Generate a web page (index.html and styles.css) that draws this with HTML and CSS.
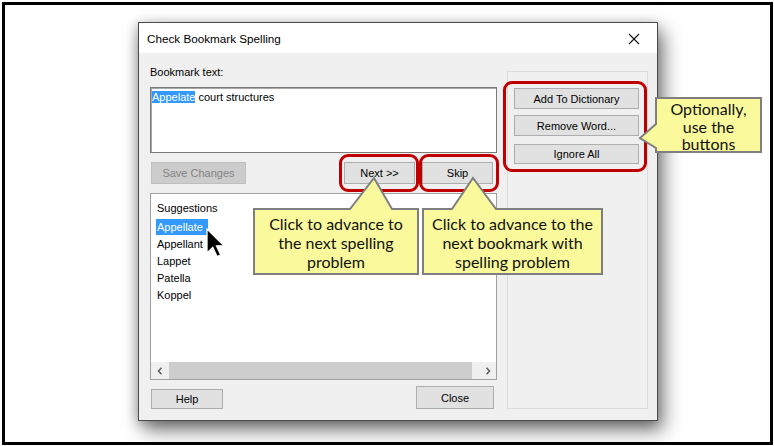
FILE: index.html
```html
<!DOCTYPE html>
<html>
<head>
<meta charset="utf-8">
<link rel="stylesheet" href="styles.css">
</head>
<body>
<div class="stage">
  <div class="frame">
    <div class="dialog">
      <div class="titlebar">
        <span class="title">Check Bookmark Spelling</span>
        <svg class="close" width="12" height="12" viewBox="0 0 12 12"><path d="M1 1 L11 11 M11 1 L1 11" stroke="#111" stroke-width="1.1" fill="none"/></svg>
      </div>
      <div class="body">
        <div class="leftcol">
          <div class="label">Bookmark text:</div>
          <div class="textarea"><span class="sel">Appelate</span> court structures</div>
          <div class="btnrow">
            <div class="btn disabled save">Save Changes</div>
            <div class="spacer"></div>
            <div class="btn next">Next &gt;&gt;</div>
            <div class="btn skip">Skip</div>
          </div>
          <div class="listbox">
            <div class="listcontent">
              <div class="heading">Suggestions</div>
              <div class="item"><span class="sel wide">Appellate</span></div>
              <div class="item"><span>Appellant</span></div>
              <div class="item"><span>Lappet</span></div>
              <div class="item"><span>Patella</span></div>
              <div class="item"><span>Koppel</span></div>
            </div>
            <div class="hscroll">
              <div class="arrow"><svg width="6" height="8" viewBox="0 0 6 8"><path d="M4.5 0.8 L1.5 4 L4.5 7.2" stroke="#606060" stroke-width="1.6" fill="none"/></svg></div>
              <div class="track"><div class="thumb"></div></div>
              <div class="arrow"><svg width="6" height="8" viewBox="0 0 6 8"><path d="M1.5 0.8 L4.5 4 L1.5 7.2" stroke="#606060" stroke-width="1.6" fill="none"/></svg></div>
            </div>
          </div>
          <div class="bottomrow">
            <div class="btn help">Help</div>
            <div class="spacer"></div>
            <div class="btn closebtn">Close</div>
          </div>
        </div>
        <div class="rightpanel">
          <div class="btn side b1">Add To Dictionary</div>
          <div class="btn side b2">Remove Word...</div>
          <div class="btn side b3">Ignore All</div>
        </div>
      </div>
    </div>
  </div>

  <div class="hl hl-next"></div>
  <div class="hl hl-skip"></div>
  <div class="hl hl-side"></div>

  <svg class="cursor" width="19" height="30" viewBox="0 0 19 30">
    <path d="M1 1 L1 25 L6.8 19.3 L11 28.5 L14.7 27 L10.5 17.8 L18 17.8 Z" fill="#000" stroke="#fff" stroke-width="1.3" stroke-linejoin="miter"/>
  </svg>

  <svg class="callouts" width="774" height="446" viewBox="0 0 774 446">
    <path d="M254 209 H350 L374 178 L392 209 H418 V274 H254 Z" fill="#fafa9c" stroke="#7f7f7f" stroke-width="2"/>
    <path d="M423 209 H452 L473 178 L496 209 H602 V274 H423 Z" fill="#fafa9c" stroke="#7f7f7f" stroke-width="2"/>
    <path d="M656 98 H761 V152 H656 V148 L640 138 L656 124 Z" fill="#fafa9c" stroke="#7f7f7f" stroke-width="2"/>
  </svg>
  <div class="ctext c1">Click to advance to<br>the next spelling<br>problem</div>
  <div class="ctext c2">Click to advance to the<br>next bookmark with<br>spelling problem</div>
  <div class="ctext c3">Optionally,<br>use the<br>buttons</div>
</div>
</body>
</html>
```

FILE: styles.css
```css
html, body {
  margin: 0;
  padding: 0;
  background: #fff;
}
.stage {
  position: relative;
  width: 774px;
  height: 446px;
  overflow: hidden;
}
.frame {
  box-sizing: border-box;
  width: 771px;
  height: 443px;
  margin: 2px 1px 1px 2px;
  border: 3px solid #000;
  background: #fff;
  overflow: hidden;
  padding: 17px 0 0 133px;
}
.dialog {
  box-sizing: border-box;
  width: 520px;
  height: 399px;
  border: 1px solid #4a4a4a;
  background: #f0f0f0;
  box-shadow: 5px 9px 18px rgba(0,0,0,0.55), -2px 2px 10px rgba(0,0,0,0.2);
  font-family: "Liberation Sans", Arial, sans-serif;
  font-size: 11px;
  color: #000;
  display: flex;
  flex-direction: column;
}
.titlebar {
  height: 30px;
  background: #fff;
  display: flex;
  align-items: center;
  padding: 0 17px 0 8px;
}
.title {
  font-size: 11.7px;
  flex: 1;
  color: #000;
  margin-top: 1px;
}
.close {
  display: block;
  margin-top: 1px;
}
.body {
  flex: 1;
  display: grid;
  grid-template-columns: 347px 141px;
  column-gap: 10px;
  align-items: start;
  padding: 11px 9px 0 11px;
}
.leftcol {
  display: flex;
  flex-direction: column;
}
.label {
  line-height: 16px;
  height: 16px;
}
.textarea {
  box-sizing: border-box;
  margin-top: 7px;
  height: 66px;
  background: #fff;
  border: 1px solid #7a7a7a;
  box-shadow: inset 1px 1px 0 #a8a8a8;
  padding: 2px 1px;
  line-height: 14px;
}
.sel {
  background: #3399ff;
  color: #fff;
}
.btnrow {
  margin-top: 9px;
  height: 22px;
  display: flex;
}
.spacer {
  flex: 1;
}
.btn {
  box-sizing: border-box;
  background: #e1e1e1;
  border: 1px solid #adadad;
  display: flex;
  align-items: center;
  justify-content: center;
  color: #000;
}
.btn.disabled {
  background: #cccccc;
  border-color: #bfbfbf;
  color: #838383;
}
.save {
  width: 95px;
  margin-left: 1px;
}
.next {
  width: 71px;
}
.skip {
  width: 71px;
  margin-left: 7px;
  margin-right: 4px;
}
.listbox {
  box-sizing: border-box;
  margin-top: 9px;
  height: 187px;
  background: #fff;
  border: 1px solid #a0a0a0;
  display: flex;
  flex-direction: column;
}
.listcontent {
  flex: 1;
  padding: 6px 0 0 6px;
}
.heading {
  line-height: 17px;
  height: 17px;
  margin-bottom: 2px;
}
.item {
  line-height: 17px;
  height: 17px;
}
.item span {
  display: inline-block;
  line-height: 16px;
  padding: 0 1px;
  margin-left: -1px;
}
.item span.wide {
  padding-right: 5px;
}
.hscroll {
  height: 17px;
  display: flex;
  background: #f0f0f0;
}
.arrow {
  width: 17px;
  display: flex;
  align-items: center;
  justify-content: center;
}
.arrow svg {
  display: block;
}
.track {
  flex: 1;
  padding: 0 7px 0 1px;
  display: flex;
}
.thumb {
  flex: 1;
  background: #cdcdcd;
}
.bottomrow {
  margin-top: 6px;
  height: 23px;
  display: flex;
  align-items: flex-end;
}
.help {
  width: 72px;
  height: 20px;
  margin-left: 1px;
}
.closebtn {
  width: 78px;
  height: 23px;
  margin-right: 3px;
}
.rightpanel {
  box-sizing: border-box;
  margin-top: 7px;
  height: 338px;
  border: 1px solid #dcdcdc;
  padding: 16px 0 0 6px;
  display: flex;
  flex-direction: column;
}
.side {
  width: 125px;
}
.b1 { height: 21px; }
.b2 { height: 21px; margin-top: 6px; }
.b3 { height: 20px; margin-top: 8px; }

.hl {
  position: absolute;
  box-sizing: border-box;
  border: 3px solid #c00000;
  border-radius: 9px;
}
.hl-next { left: 339px; top: 154px; width: 80px; height: 38px; }
.hl-skip { left: 419px; top: 154px; width: 80px; height: 38px; }
.hl-side { left: 503px; top: 81px; width: 144px; height: 91px; }

.cursor {
  position: absolute;
  left: 206px;
  top: 228px;
}
.callouts {
  position: absolute;
  left: 0;
  top: 0;
}
.ctext {
  position: absolute;
  font-family: Lato, "Liberation Sans", sans-serif;
  font-size: 16px;
  color: #111;
  text-align: center;
}
.c1 { left: 254px; top: 214px; width: 164px; line-height: 19px; }
.c2 { left: 423px; top: 214px; width: 179px; line-height: 19px; }
.c3 { left: 656px; top: 100px; width: 105px; line-height: 17.5px; }
```
